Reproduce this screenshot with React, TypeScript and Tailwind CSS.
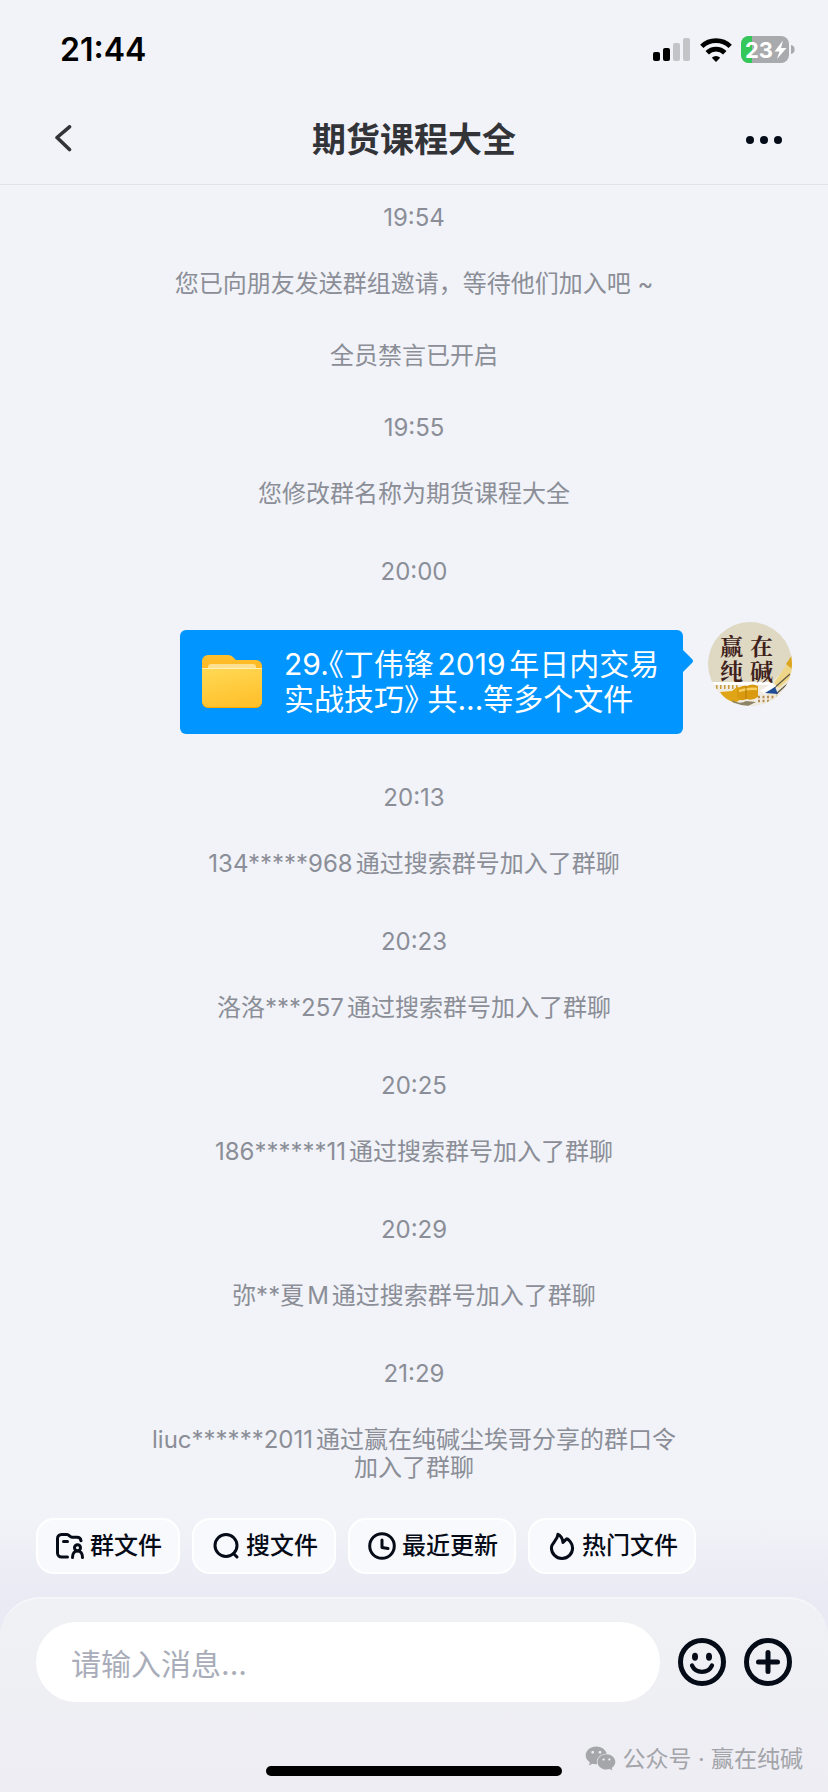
import type { ReactNode } from "react";
import { FaWeixin } from "react-icons/fa";

type Entry =
  | { kind: "time"; text: string; gap: string }
  | { kind: "notice"; text: string; gap: string }
  | { kind: "file"; gap: string };

const entries: Entry[] = [
  { kind: "time", text: "19:54", gap: "mt-0" },
  { kind: "notice", text: "您已向朋友发送群组邀请，等待他们加入吧 ~", gap: "mt-[38px]" },
  { kind: "notice", text: "全员禁言已开启", gap: "mt-11" },
  { kind: "time", text: "19:55", gap: "mt-11" },
  { kind: "notice", text: "您修改群名称为期货课程大全", gap: "mt-[38px]" },
  { kind: "time", text: "20:00", gap: "mt-[50px]" },
  { kind: "file", gap: "mt-9" },
  { kind: "time", text: "20:13", gap: "mt-[50px]" },
  { kind: "notice", text: "134*****968通过搜索群号加入了群聊", gap: "mt-[38px]" },
  { kind: "time", text: "20:23", gap: "mt-[50px]" },
  { kind: "notice", text: "洛洛***257通过搜索群号加入了群聊", gap: "mt-[38px]" },
  { kind: "time", text: "20:25", gap: "mt-[50px]" },
  { kind: "notice", text: "186******11通过搜索群号加入了群聊", gap: "mt-[38px]" },
  { kind: "time", text: "20:29", gap: "mt-[50px]" },
  { kind: "notice", text: "弥**夏M通过搜索群号加入了群聊", gap: "mt-[38px]" },
  { kind: "time", text: "21:29", gap: "mt-[50px]" },
  { kind: "notice", text: "liuc******2011通过赢在纯碱尘埃哥分享的群口令加入了群聊", gap: "mt-[38px]" },
];

function StatusBar() {
  return (
    <div className="flex h-[98px] items-center justify-between pt-[2px] pr-[33px] pl-[60px]">
      <span className="text-[32px] leading-none font-semibold text-black">21:44</span>
      <div className="flex items-center gap-[9px]">
        <svg width="38" height="24" viewBox="0 0 38 24" aria-hidden="true">
          <rect x="0" y="14" width="7" height="9" rx="2" fill="#000" />
          <rect x="10" y="10" width="7" height="13" rx="2" fill="#000" />
          <rect x="20" y="5" width="7" height="18" rx="2" fill="#c3c4c8" />
          <rect x="30" y="0" width="7" height="23" rx="2" fill="#c3c4c8" />
        </svg>
        <svg width="32" height="24" viewBox="0 0 32 24" aria-hidden="true">
          <g fill="none" stroke="#000" strokeWidth="4.8">
            <path d="M1.8 8.400a20.400 20.400 0 0 1 28.400 0" />
            <path d="M7.200 14.800a12.600 12.600 0 0 1 17.600 0" />
          </g>
          <path d="M16 24l-4.200-4.300a6 6 0 0 1 8.400 0z" fill="#000" />
        </svg>
        <svg width="54" height="28" viewBox="0 0 54 28" role="img" aria-label="23%">
          <defs>
            <clipPath id="battery">
              <rect x="0" y="0" width="48" height="27" rx="8" />
            </clipPath>
          </defs>
          <g clipPath="url(#battery)">
            <rect width="48" height="27" fill="#a9aaad" />
            <rect width="11" height="27" fill="#34c759" />
          </g>
          <path d="M50 9v9a4.600 4.600 0 0 0 0-9z" fill="#a9aaad" />
          <text x="4" y="22" fontSize="22" fontWeight="700" fill="#fff">23</text>
          <path d="M42 4.500L33.500 15.500h5l-2.500 7.500L45.500 12h-5.500z" fill="#fff" />
        </svg>
      </div>
    </div>
  );
}

function TitleBar() {
  return (
    <header className="flex h-[87px] items-center justify-between border-b border-[#e2e3e8] px-[38px] pb-[2px]">
      <button type="button" aria-label="返回" className="flex h-10 w-[52px] items-center justify-center">
        <svg width="20" height="30" viewBox="0 0 20 30" fill="none" stroke="#333438" strokeWidth="3.6" strokeLinecap="round" strokeLinejoin="round">
          <path d="M15.500 1.800L3 12.500l12.500 12" />
        </svg>
      </button>
      <h1 className="text-[34px] leading-none font-bold text-[#333438]">期货课程大全</h1>
      <button type="button" aria-label="更多" className="flex h-10 w-[52px] items-center justify-center">
        <svg width="36" height="8" viewBox="0 0 36 8" fill="#060b18">
          <circle cx="4" cy="4" r="4" />
          <circle cx="18" cy="4" r="4" />
          <circle cx="32" cy="4" r="4" />
        </svg>
      </button>
    </header>
  );
}

function FolderIcon() {
  return (
    <svg width="60" height="54" viewBox="0 0 60 54" className="shrink-0" aria-hidden="true">
      <defs>
        <linearGradient id="folderBack" x1="0" y1="0" x2="0" y2="1">
          <stop offset="0" stopColor="#ffbf2e" />
          <stop offset="1" stopColor="#ffa800" />
        </linearGradient>
        <linearGradient id="folderFront" x1="0" y1="0" x2="0.3" y2="1">
          <stop offset="0" stopColor="#ffd955" />
          <stop offset="1" stopColor="#ffc22f" />
        </linearGradient>
      </defs>
      <path d="M0 47V6a6 6 0 0 1 6-6h20q3 0 5 2l3 3h20a6 6 0 0 1 6 6v36a6 6 0 0 1-6 6H6a6 6 0 0 1-6-6z" fill="url(#folderBack)" />
      <path d="M6 20v-8q0-3 3-3h42q3 0 3 3v8z" fill="#ffe08e" />
      <path d="M0 13h60v33a6 6 0 0 1-6 6H6a6 6 0 0 1-6-6z" fill="url(#folderFront)" />
      <path d="M0 13.500h60" stroke="#fff0b8" strokeWidth="1.200" />
    </svg>
  );
}

function Avatar() {
  return (
    <svg width="84" height="84" viewBox="0 0 84 84" className="shrink-0" role="img" aria-label="赢在纯碱">
      <defs>
        <clipPath id="avatar">
          <circle cx="42" cy="42" r="42" />
        </clipPath>
      </defs>
      <g clipPath="url(#avatar)">
        <rect width="84" height="84" fill="#dfd8c3" />
        <path d="M0 61h66v23H0z" fill="#f1ece2" />
        <path d="M84 40L60 64v20h24z" fill="#efe7d2" />
        <path d="M4 61.500h60" stroke="#fff" strokeWidth="3" />
        <path d="M8 65h24" stroke="#c99a3a" strokeWidth="4" strokeDasharray="1.500 2.500" />
        <path d="M84 35L66 61l5 5 13-12z" fill="#efd587" />
        <path d="M84 33l-6 9 6 5z" fill="#dba520" />
        <path d="M64 68l18-16M68 72l16-14" stroke="#5b5546" strokeWidth="1.200" />
        <path d="M12 70l12-1 5-4 6 1v10l-8 5H20z" fill="#e0a516" />
        <path d="M24 78q8 5 14 1l10 1-8 4H26z" fill="#8d8468" />
        <path d="M29 68q4-5 10-4 5-3 11 0v11q-6 4-11 2-7 3-10-2z" fill="#d99a0f" />
        <path d="M31 69q9-3 18-2" stroke="#f6cf60" strokeWidth="2.500" fill="none" />
        <path d="M38 64v13" stroke="#b67d08" strokeWidth="1" />
        <path d="M52 69l12-8 4 3-11 8z" fill="#fff" />
        <path d="M57 71l10-6 3 7z" fill="#1f4d96" />
        <path d="M50 75h22M50 79h18" stroke="#b88e57" strokeWidth="2.500" strokeDasharray="2 2.500" />
        <g className="font-['Noto_Serif_CJK_SC','Noto_Sans_CJK_SC',serif]" fill="#3f1f1c" fontSize="23" fontWeight="700">
          <text x="12" y="33">赢</text>
          <text x="42" y="33">在</text>
          <text x="12" y="58">纯</text>
          <text x="42" y="58">碱</text>
        </g>
      </g>
    </svg>
  );
}

function FileMessage() {
  return (
    <div className="flex items-start justify-end gap-[25px] pr-9">
      <button type="button" className="relative mt-2 flex h-[104px] w-[503px] items-center gap-[22px] rounded-md bg-[#0095ff] pl-[22px] text-left">
        <FolderIcon />
        <span className="text-[30px] leading-[35px] whitespace-nowrap text-white">
          <span className="block [text-autospace:normal]">
            29.<span className="[font-feature-settings:'halt']">《</span>丁伟锋2019年日内交易
          </span>
          <span className="block [text-autospace:no-autospace]">
            实战技巧<span className="[font-feature-settings:'halt']">》</span> 共...等多个文件
          </span>
        </span>
        <svg width="11" height="22" viewBox="0 0 11 22" className="absolute top-5 left-full" aria-hidden="true">
          <path d="M0 0l9 9q2 2 0 4l-9 9z" fill="#0095ff" />
        </svg>
      </button>
      <Avatar />
    </div>
  );
}

function Shortcut({ icon, label }: { icon: ReactNode; label: string }) {
  return (
    <button
      type="button"
      className="flex h-14 items-center gap-[6px] rounded-[18px] border-2 border-white bg-[#f8f9fc] pr-4 pl-[18px] text-2xl leading-none font-medium text-[#060b18]"
    >
      {icon}
      {label}
    </button>
  );
}

const stroke = {
  width: 28,
  height: 28,
  viewBox: "0 0 28 28",
  fill: "none",
  stroke: "#060b18",
  strokeWidth: 3,
  strokeLinecap: "round" as const,
  strokeLinejoin: "round" as const,
};

function Shortcuts() {
  return (
    <nav className="flex gap-3 px-9">
      <Shortcut
        label="群文件"
        icon={
          <svg {...stroke}>
            <path d="M11.500 25H5.500a4 4 0 0 1-4-4V6.500a4 4 0 0 1 4-4h5.500c2 0 3 2.800 5 2.800h5a4 4 0 0 1 4 3.500" />
            <path d="M7.500 9.500h4" />
            <circle cx="21.500" cy="15.800" r="3" />
            <path d="M16.500 25.500c0-4 2-6.500 5-6.500s5 2.500 5 6.500" />
          </svg>
        }
      />
      <Shortcut
        label="搜文件"
        icon={
          <svg {...stroke}>
            <circle cx="14" cy="13.500" r="11" />
            <path d="M21.500 21.500l3.500 3.500" />
          </svg>
        }
      />
      <Shortcut
        label="最近更新"
        icon={
          <svg {...stroke}>
            <circle cx="14" cy="14" r="12.300" />
            <path d="M14 8v7.500l6 1" />
          </svg>
        }
      />
      <Shortcut
        label="热门文件"
        icon={
          <svg {...stroke}>
            <path d="M10 2.200c3 1.600 4.600 4.600 5 8.300l3.600-3.600c1.200-.4 6 4 6 9A10.600 10.600 0 0 1 14 26.500 10.600 10.600 0 0 1 3.400 16C3.400 10.500 9.500 9 10 2.200z" />
          </svg>
        }
      />
    </nav>
  );
}

function Composer() {
  return (
    <footer className="relative mt-[23px] rounded-t-[40px] border-t-2 border-[#f5f6f9] bg-linear-to-b from-[#f0f1f5] to-[#ededf3] px-9 pt-[23px] pb-4">
      <div className="flex items-center gap-[18px]">
        <input
          type="text"
          aria-label="消息"
          placeholder="请输入消息..."
          className="h-20 min-w-0 flex-1 rounded-full bg-white px-[35px] pt-1 text-[30px] text-[#060b18] placeholder:text-[#a9adb9] focus:outline-none"
        />
        <button type="button" aria-label="表情">
          <svg width="48" height="48" viewBox="0 0 48 48" fill="none" stroke="#060b18" strokeWidth="5" strokeLinecap="round">
            <circle cx="24" cy="24" r="21.500" />
            <path d="M14 27.500c4 8.500 16 8.500 20 0" strokeWidth="4.200" />
            <ellipse cx="17" cy="18.800" rx="3" ry="4" fill="#060b18" stroke="none" />
            <ellipse cx="31" cy="18.800" rx="3" ry="4" fill="#060b18" stroke="none" />
          </svg>
        </button>
        <button type="button" aria-label="添加">
          <svg width="48" height="48" viewBox="0 0 48 48" fill="none" stroke="#060b18" strokeWidth="5" strokeLinecap="round">
            <circle cx="24" cy="24" r="21.500" />
            <path d="M24 14.500v19M14.500 24h19" />
          </svg>
        </button>
      </div>
      <div className="mx-auto mt-16 h-[10px] w-[296px] rounded-full bg-black" />
      <div className="absolute right-[25px] bottom-[18px] flex items-center gap-[6px] text-[23px] leading-7 text-[#a3a4a9]">
        <FaWeixin size={31} color="#a5a6aa" />
        <span>公众号 · 赢在纯碱</span>
      </div>
    </footer>
  );
}

export default function App() {
  return (
    <div
      lang="zh-CN"
      className="flex min-h-screen flex-col bg-[#f1f3f8] font-[Inter,'Noto_Sans_CJK_SC',sans-serif]"
    >
      <StatusBar />
      <TitleBar />
      <main className="flex-1 pt-[19px] pb-9">
        {entries.map((entry, index) =>
          entry.kind === "file" ? (
            <div key={index} className={entry.gap}>
              <FileMessage />
            </div>
          ) : (
            <p
              key={index}
              className={`${entry.gap} mx-auto max-w-[544px] text-center text-2xl leading-7 text-[#8b8e97] [text-autospace:normal]`}
            >
              {entry.text}
            </p>
          ),
        )}
      </main>
      <div className="bg-linear-to-b from-[#f1f3f8] to-[#e9eaf3] to-30%">
        <Shortcuts />
        <Composer />
      </div>
    </div>
  );
}
